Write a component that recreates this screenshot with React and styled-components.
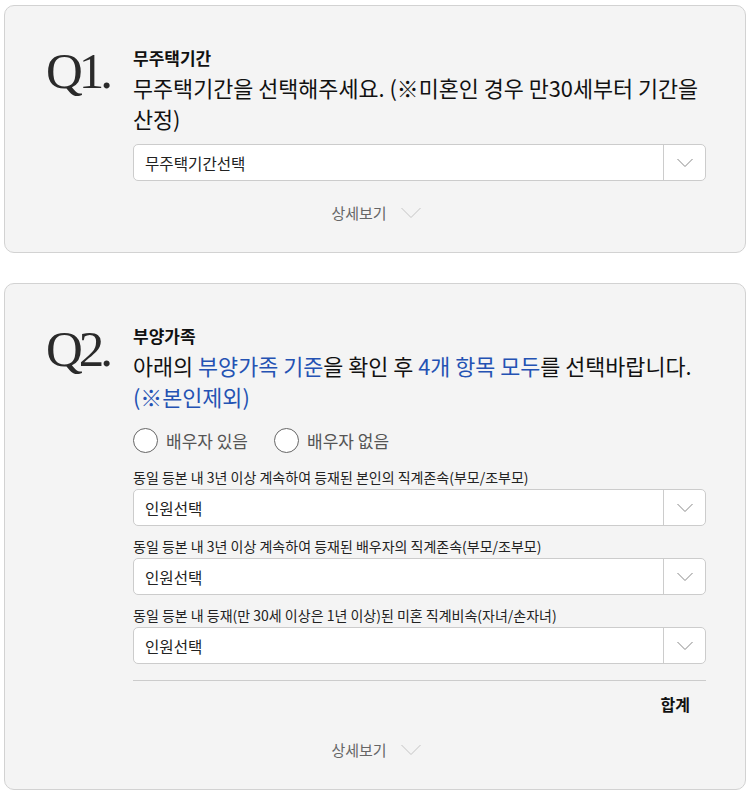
import React from "react";
import styled, { createGlobalStyle } from "styled-components";

const GlobalStyle = createGlobalStyle`
  html, body {
    margin: 0;
    padding: 0;
    background: #ffffff;
  }
  body {
    font-family: "Noto Sans CJK KR", "Noto Sans", sans-serif;
    color: #111111;
  }
  * { box-sizing: border-box; }
`;

const Page = styled.div`
  display: flex;
  flex-direction: column;
  gap: 30px;
  padding: 5px 9px 8px 4px;
`;

const Card = styled.section`
  background: #f4f4f4;
  border: 1px solid #d2d2d2;
  border-radius: 10px;
  padding: 41px 39px 28px 41px;
`;

const QuestionGrid = styled.div`
  display: grid;
  grid-template-columns: 87px 1fr;
`;

const QNum = styled.div`
  font-family: "Liberation Serif", "DejaVu Serif", serif;
  font-size: 51px;
  line-height: 1;
  letter-spacing: -4px;
  color: #2a2a2a;
  margin-top: -1px;
`;

const Body = styled.div`
  display: flex;
  flex-direction: column;
  min-width: 0;
`;

const Title = styled.div`
  font-size: 17px;
  font-weight: 700;
  line-height: 22px;
  color: #111;
`;

const Desc = styled.p`
  margin: 3px 0 0;
  font-size: 21.8px;
  line-height: 31px;
  color: #111;
  word-break: keep-all;
`;

const Blue = styled.span`
  color: #2452b3;
`;

const SelectBox = styled.div`
  display: flex;
  align-items: stretch;
  height: 37px;
  margin-top: ${(p) => p.$mt || 0}px;
  background: #ffffff;
  border: 1px solid #cccccc;
  border-radius: 5px;
`;

const SelectText = styled.div`
  flex: 1;
  display: flex;
  align-items: center;
  padding-left: 11px;
  font-size: 15.6px;
  color: #222;
`;

const SelectArrow = styled.div`
  width: 42px;
  display: flex;
  align-items: center;
  justify-content: center;
  border-left: 1px solid #cccccc;
`;

const RadioRow = styled.div`
  display: flex;
  align-items: center;
  gap: 26px;
  margin-top: 15px;
  height: 26px;
`;

const RadioItem = styled.label`
  display: flex;
  align-items: center;
  gap: 8px;
  font-size: 17px;
  color: #555;
`;

const RadioCircle = styled.span`
  width: 25px;
  height: 25px;
  border-radius: 50%;
  border: 1px solid #666;
  background: #fff;
`;

const FieldLabel = styled.div`
  margin-top: ${(p) => p.$mt}px;
  font-size: 14px;
  line-height: 18px;
  color: #222;
`;

const Divider = styled.hr`
  margin: 16px 0 0;
  border: 0;
  border-top: 1px solid #cccccc;
`;

const Total = styled.div`
  margin: 12px 0 3px;
  padding-right: 16px;
  text-align: right;
  font-size: 16px;
  font-weight: 700;
  line-height: 22px;
  color: #111;
`;

const MoreRow = styled.div`
  display: flex;
  justify-content: center;
  align-items: center;
  gap: 14px;
  margin-top: 21px;
  font-size: 15px;
  line-height: 22px;
  color: #666;
`;

const Chevron = ({ w = 16, h = 8, color = "#888" }) => (
  <svg width={w} height={h + 2} viewBox={`0 0 ${w} ${h + 2}`} fill="none">
    <polyline
      points={`0.5,1 ${w / 2},${h + 0.5} ${w - 0.5},1`}
      stroke={color}
      strokeWidth="1"
    />
  </svg>
);

const Select = ({ value, mt }) => (
  <SelectBox $mt={mt}>
    <SelectText>{value}</SelectText>
    <SelectArrow>
      <Chevron />
    </SelectArrow>
  </SelectBox>
);

const More = () => (
  <MoreRow>
    <span>상세보기</span>
    <Chevron w={20} h={10} color="#c4c4c4" />
  </MoreRow>
);

export default function App() {
  return (
    <>
      <GlobalStyle />
      <Page>
        <Card>
          <QuestionGrid>
            <QNum>Q1.</QNum>
            <Body>
              <Title>무주택기간</Title>
              <Desc>
                무주택기간을 선택해주세요. (※미혼인 경우 만30세부터 기간을
                산정)
              </Desc>
              <Select value="무주택기간선택" mt={10} />
            </Body>
          </QuestionGrid>
          <More />
        </Card>

        <Card>
          <QuestionGrid>
            <QNum>Q2.</QNum>
            <Body>
              <Title>부양가족</Title>
              <Desc>
                아래의 <Blue>부양가족 기준</Blue>을 확인 후{" "}
                <Blue>4개 항목 모두</Blue>를 선택바랍니다.{" "}
                <Blue>(※본인제외)</Blue>
              </Desc>
              <RadioRow>
                <RadioItem>
                  <RadioCircle />
                  배우자 있음
                </RadioItem>
                <RadioItem>
                  <RadioCircle />
                  배우자 없음
                </RadioItem>
              </RadioRow>
              <FieldLabel $mt={15}>
                동일 등본 내 3년 이상 계속하여 등재된 본인의 직계존속(부모/조부모)
              </FieldLabel>
              <Select value="인원선택" mt={3} />
              <FieldLabel $mt={11}>
                동일 등본 내 3년 이상 계속하여 등재된 배우자의 직계존속(부모/조부모)
              </FieldLabel>
              <Select value="인원선택" mt={3} />
              <FieldLabel $mt={11}>
                동일 등본 내 등재(만 30세 이상은 1년 이상)된 미혼 직계비속(자녀/손자녀)
              </FieldLabel>
              <Select value="인원선택" mt={3} />
              <Divider />
              <Total>합계</Total>
            </Body>
          </QuestionGrid>
          <More />
        </Card>
      </Page>
    </>
  );
}
